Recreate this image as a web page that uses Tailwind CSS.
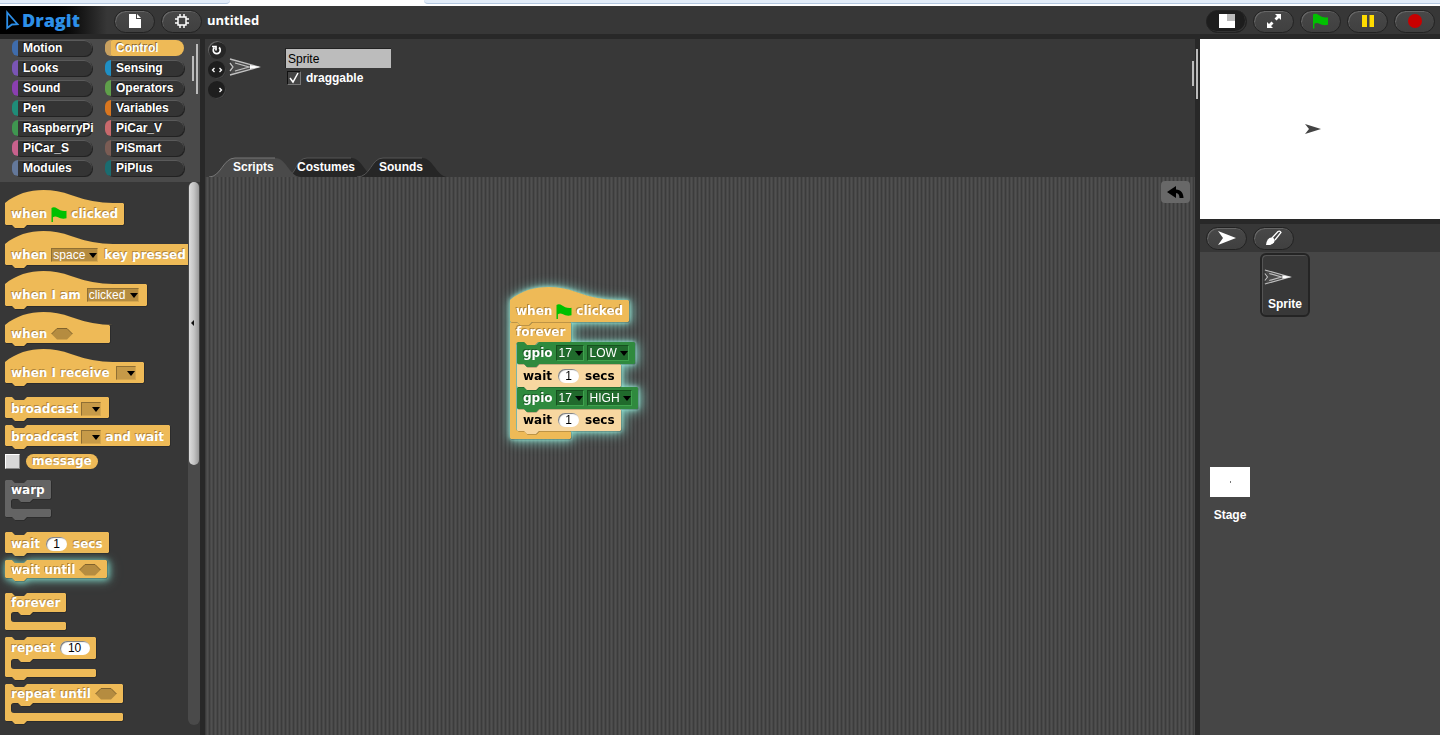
<!DOCTYPE html>
<html lang="en">
<head>
<meta charset="utf-8">
<title>Dragit</title>
<script src="https://cdn.jsdelivr.net/npm/@tailwindcss/browser@4"></script>
</head>
<body class="flex h-screen flex-col overflow-hidden bg-[#282828] font-['Liberation_Sans',sans-serif] text-xs font-bold text-white">

<svg class="hidden">
  <symbol id="flag" viewBox="0 0 16 16"><path d="M0 1C2-.2 4 .2 6 1.500S12 5 16 4v8C12 13 9 12 7 11s-4-1-5.500 0V16H0z" fill="#00c000"/></symbol>
  <symbol id="arrow" viewBox="0 0 8 5"><path d="M0 0h8L4 5z" fill="#000"/></symbol>
  <symbol id="hex" viewBox="0 0 22 12"><path d="M6 .5h10L21.500 6 16 11.500H6L.5 6z" fill="#b58c40"/><path d="M.5 6 6 .5h10L21.500 6" fill="none" stroke="#80622c"/></symbol>
  <symbol id="turtle" viewBox="0 0 32 18"><path d="M1 1 30 9 1 17 5 9z" fill="#4a4a4a"/><path d="M1 1 30 9 1 17M1 5 4 9 1 13M6 5l14 4-14 4" fill="none" stroke="#c0c0c0" stroke-width="1.300"/><path d="M21 7l10 2-10 2z" fill="#fff"/></symbol>
</svg>

<div class="flex h-[6px] shrink-0 bg-white">
  <div class="h-1 w-[230px] rounded-br border-b border-[#b4c8e0] bg-[#e2ecf8]"></div>
  <div class="w-[194px]"></div>
  <div class="h-1 flex-1 rounded-bl border-b border-[#b4c8e0] bg-[#e2ecf8]"></div>
</div>

<header class="flex h-7 shrink-0 items-center bg-[#373737]">
  <div class="flex h-full w-[107px] shrink-0 items-center gap-0.5 bg-linear-to-r from-black from-40% to-[#373737] pl-1.5">
    <svg class="h-5 w-[14px]" viewBox="0 0 14 20"><path d="M1.200 2.500 11.500 14.200 6 14.500 1.200 18z" fill="none" stroke="#2d8fe8" stroke-width="1.800"/></svg>
    <span class="font-['Open_Sans',sans-serif] text-[18px] leading-6 font-extrabold text-[#2d8fe8]">Dragit</span>
  </div>
  <div class="flex gap-1.5 pt-0.5 pl-[7px]">
    <button aria-label="File" class="flex h-[23px] w-[41px] items-center justify-center rounded-full border border-[#222] bg-linear-to-b from-[#484848] to-[#404040] shadow-[inset_1px_1px_0_#666]"><svg class="h-[14px] w-3" viewBox="0 0 12 14"><path d="M0 0h7v5h5v9H0zM8 0l4 4H8z" fill="#fff"/></svg></button>
    <button aria-label="Settings" class="flex h-[23px] w-[41px] items-center justify-center rounded-full border border-[#222] bg-linear-to-b from-[#484848] to-[#404040] shadow-[inset_1px_1px_0_#666]"><svg class="size-[14px]" viewBox="0 0 14 14"><path d="M5 0v3M9 0v3M5 11v3M9 11v3M0 5h3M0 9h3M11 5h3M11 9h3M3 3h8v8H3z" fill="none" stroke="#fff" stroke-width="1.500"/></svg></button>
  </div>
  <h1 class="ml-[5px] flex-1 pt-0.5 font-['Open_Sans',sans-serif] text-[13px]">untitled</h1>
  <div class="flex gap-1.5 pt-0.5 pr-[5px]">
    <button aria-label="Stage size" class="flex h-[23px] w-[41px] items-center justify-center rounded-full border border-[#222] bg-[#1d1d1d] shadow-[inset_-1px_-1px_0_#333]"><svg class="h-[14px] w-4" viewBox="0 0 16 14"><path d="M0 0h16v14H0z" fill="#fff"/><path d="M8 0h8v7H8z" fill="#bbb"/></svg></button>
    <button aria-label="Full screen" class="flex h-[23px] w-[41px] items-center justify-center rounded-full border border-[#222] bg-linear-to-b from-[#484848] to-[#404040] shadow-[inset_1px_1px_0_#666]"><svg class="size-[14px]" viewBox="0 0 14 14"><path d="M14 0v6l-2-2-2.500 2.500-2-2L10 2 8 0zM0 14V8l2 2 2.500-2.500 2 2L4 12l2 2z" fill="#fff"/></svg></button>
    <button aria-label="Run" class="flex h-[23px] w-[41px] items-center justify-center rounded-full border border-[#222] bg-linear-to-b from-[#484848] to-[#404040] shadow-[inset_1px_1px_0_#666]"><svg class="h-4 w-[15px]"><use href="#flag"/></svg></button>
    <button aria-label="Pause" class="flex h-[23px] w-[41px] items-center justify-center rounded-full border border-[#222] bg-linear-to-b from-[#484848] to-[#404040] shadow-[inset_1px_1px_0_#666]"><svg class="h-3 w-3" viewBox="0 0 12 12"><path d="M0 0h5v12H0zM7.500 0h5v12h-5z" fill="#ffdc00"/></svg></button>
    <button aria-label="Stop" class="flex h-[23px] w-[41px] items-center justify-center rounded-full border border-[#222] bg-linear-to-b from-[#484848] to-[#404040] shadow-[inset_1px_1px_0_#666]"><span class="size-[14px] rounded-full bg-[#c80000]"></span></button>
  </div>
</header>

<main class="flex min-h-0 flex-1 gap-[5px] pt-[5px]">

  <aside class="flex w-[200px] shrink-0 flex-col bg-[#373737]">
    <div class="relative h-[143px] shrink-0 bg-[#4a4a4a] pl-3">
      <div id="cats" class="grid w-[172px] grid-cols-[80px_79px] gap-x-[13px] gap-y-[4px] pt-px"></div>
      <div class="absolute top-[17px] left-[192px] h-[25px] w-0.5 bg-[#bbb]"></div>
      <div class="absolute top-[5px] left-[196px] h-[50px] w-0.5 bg-[#bbb]"></div>
    </div>

    <div class="flex min-h-0 flex-1">
      <div class="flex min-w-0 flex-1 flex-col items-start gap-[7px] overflow-hidden pt-[9px] pl-[5px] font-['DejaVu_Sans',sans-serif] leading-4 whitespace-nowrap [text-shadow:-1px_-1px_0_#b0863c]">
        <div data-shape="hat" class="relative isolate flex h-[34px] shrink-0 items-center gap-1 px-1.5 pt-3"><span>when</span><svg class="h-[15px] w-4"><use href="#flag"/></svg><span>clicked</span></div>
        <div data-shape="hat" class="relative isolate flex h-[33px] w-[186px] shrink-0 items-center gap-1 pt-3 pl-1.5"><span>when</span>
          <span class="relative flex"><select aria-label="Key" class="h-[14px] w-[47px] appearance-none border border-[#8f6f34] border-r-[#d6a74e] border-b-[#d6a74e] bg-[#b58c40] pl-px font-['Liberation_Sans',sans-serif] text-xs leading-3 font-normal"><option>space</option></select><svg class="pointer-events-none absolute top-[5px] right-px h-[5px] w-2"><use href="#arrow"/></svg></span><span class="pl-0.5">key pressed</span></div>
        <div data-shape="hat" class="relative isolate flex h-[34px] shrink-0 items-center gap-1.5 px-1.5 pt-3"><span>when I am</span>
          <span class="relative flex pr-0.5"><select aria-label="Interaction" class="h-[14px] w-[52px] appearance-none border border-[#8f6f34] border-r-[#d6a74e] border-b-[#d6a74e] bg-[#b58c40] pl-px font-['Liberation_Sans',sans-serif] text-xs leading-3 font-normal"><option>clicked</option></select><svg class="pointer-events-none absolute top-[5px] right-[3px] h-[5px] w-2"><use href="#arrow"/></svg></span></div>
        <div data-shape="hat" class="relative isolate flex h-[30px] w-[105px] shrink-0 items-center gap-1 px-1.5 pt-3"><span>when</span><svg class="h-3 w-[22px]"><use href="#hex"/></svg></div>
        <div data-shape="hat" class="relative isolate flex h-[33px] shrink-0 items-center gap-1.5 px-1.5 pt-3"><span>when I receive</span>
          <span class="relative flex pr-0.5"><select aria-label="Received message" class="h-[14px] w-5 appearance-none border border-[#8f6f34] border-r-[#d6a74e] border-b-[#d6a74e] bg-[#c69a48]"><option></option></select><svg class="pointer-events-none absolute top-[5px] right-[3px] h-[5px] w-2"><use href="#arrow"/></svg></span></div>

        <div data-shape="command" class="relative isolate mt-[7px] flex h-[21px] shrink-0 items-center gap-0.5 px-1.5 pt-0.5"><span>broadcast</span>
          <span class="relative flex pr-0.5"><select aria-label="Message" class="h-[14px] w-5 appearance-none border border-[#8f6f34] border-r-[#d6a74e] border-b-[#d6a74e] bg-[#c69a48]"><option></option></select><svg class="pointer-events-none absolute top-[5px] right-[3px] h-[5px] w-2"><use href="#arrow"/></svg></span></div>
        <div data-shape="command" class="relative isolate flex h-[21px] shrink-0 items-center gap-0.5 px-1.5 pt-0.5"><span>broadcast</span>
          <span class="relative flex pr-0.5"><select aria-label="Message to wait for" class="h-[14px] w-5 appearance-none border border-[#8f6f34] border-r-[#d6a74e] border-b-[#d6a74e] bg-[#c69a48]"><option></option></select><svg class="pointer-events-none absolute top-[5px] right-[3px] h-[5px] w-2"><use href="#arrow"/></svg></span><span class="pl-px">and wait</span></div>
        <label class="mt-px flex shrink-0 items-center gap-1.5"><input type="checkbox" class="size-[15px] appearance-none border border-[#888] border-t-white border-l-white bg-[#d8d8d8]"><span class="h-[15px] rounded-full bg-[#eeba57] px-1.5 leading-[15px]">message</span></label>

        <div data-shape="loop" data-fill="#646464" class="relative isolate mt-1 flex w-[46px] shrink-0 flex-col [text-shadow:-1px_-1px_0_#444]"><div class="flex h-[19px] items-center px-1.5">warp</div><div class="h-[10px]"></div><div class="h-2"></div></div>

        <div data-shape="command" class="relative isolate mt-2 flex h-[21px] shrink-0 items-center gap-1.5 px-1.5 pt-0.5"><span>wait</span><input aria-label="Seconds to wait" value="1" class="h-[14px] w-[21px] rounded-full bg-white text-center font-['Liberation_Sans',sans-serif] text-xs font-normal text-black shadow-[inset_1px_1px_1px_#777] [text-shadow:none]"><span>secs</span></div>
        <div data-shape="command" class="relative isolate flex h-[18px] shrink-0 items-center gap-1 px-1.5 pt-0.5 [filter:drop-shadow(1px_1px_3px_#7fd8c8cc)_drop-shadow(1px_1px_5px_#7fd8c8aa)]"><span>wait until</span><svg class="h-3 w-[22px]"><use href="#hex"/></svg></div>

        <div data-shape="loop" data-cap class="relative isolate mt-2 flex shrink-0 flex-col"><div class="flex h-[19px] items-center px-1.5">forever</div><div class="h-[10px]"></div><div class="h-2"></div></div>
        <div data-shape="loop" class="relative isolate flex shrink-0 flex-col"><div class="flex h-[22px] items-center gap-1 px-1.5"><span>repeat</span><input aria-label="Repeat count" value="10" class="h-[14px] w-[30px] rounded-full bg-white text-center font-['Liberation_Sans',sans-serif] text-xs font-normal text-black shadow-[inset_1px_1px_1px_#777] [text-shadow:none]"></div><div class="h-[10px]"></div><div class="h-2"></div></div>
        <div data-shape="loop" class="relative isolate flex shrink-0 flex-col"><div class="flex h-[19px] items-center gap-1 px-1.5"><span>repeat until</span><svg class="h-3 w-[22px]"><use href="#hex"/></svg></div><div class="h-[10px]"></div><div class="h-2"></div></div>
      </div>
      <div class="relative mb-[10px] w-3 shrink-0 rounded-full bg-[#4a4a4a]">
        <div class="ml-px h-[283px] w-[10px] rounded-full bg-linear-to-r from-[#ddd] via-[#c4c4c4] to-[#999]"></div>
        <svg class="absolute top-[137px] left-[2px] h-2 w-[6px]" viewBox="0 0 6 8"><path d="M4 1v6L1 4z" fill="#111"/></svg>
      </div>
    </div>
  </aside>

  <section class="flex min-w-0 flex-1 flex-col bg-[#383838]">
    <div class="relative flex h-[138px] shrink-0">
      <div class="flex w-6 flex-col items-center gap-[2px] pt-[2px]">
        <button aria-label="Can rotate" class="flex size-[18px] items-center justify-center rounded-full bg-[#262626] shadow-[inset_1px_1px_0_#666]"><svg class="size-[10px]" viewBox="0 0 10 10"><path d="M7 2.500A3.500 3.500 0 1 1 2.500 2.500M0 1.500h4v4" fill="none" stroke="#fff" stroke-width="1.700"/></svg></button>
        <button aria-label="Only face left or right" class="flex size-[18px] items-center justify-center rounded-full bg-[#1e1e1e] shadow-[inset_-1px_-1px_0_#444]"><svg class="h-[6px] w-3" viewBox="0 0 12 6"><path d="M3.500 1l-2 2 2 2M8.500 1l2 2-2 2" fill="none" stroke="#fff" stroke-width="1.300"/></svg></button>
        <button aria-label="Don't rotate" class="flex size-[18px] items-center justify-center rounded-full bg-[#1e1e1e] shadow-[inset_-1px_-1px_0_#444]"><svg class="h-[6px] w-3" viewBox="0 0 12 6"><path d="M8.500 1l2 2-2 2" fill="none" stroke="#fff" stroke-width="1.300"/></svg></button>
      </div>
      <svg class="mt-[19px] h-[18px] w-8"><use href="#turtle"/></svg>
      <div class="mt-[9px] ml-6 flex flex-col gap-[2px]">
        <input aria-label="Sprite name" value="Sprite" class="h-[20px] w-[106px] border-t border-l border-[#222] bg-[#bcbcbc] pl-0.5 text-xs font-normal text-black">
        <label class="flex items-center gap-[5px] pl-[2px]"><span class="relative flex"><input type="checkbox" checked class="size-[14px] appearance-none border border-[#111] border-r-[#777] border-b-[#777] bg-[#444]"><svg class="pointer-events-none absolute inset-0 size-[14px]" viewBox="0 0 14 14"><path d="M3 7l3 4 5-9" fill="none" stroke="#fff" stroke-width="1.500"/></svg></span>draggable</label>
      </div>
      <nav class="absolute bottom-0 left-0 flex h-5 items-center pl-7">
        <svg class="absolute bottom-0 left-0 h-5 w-[242px]" viewBox="0 0 242 20">
          <path d="M152 20c14 0 14-19 26-19h39c12 0 14 19 26 19z" fill="#262626"/>
          <path d="M80 20C92 20 90 1 102 1h44c12 0 14 19 26 19z" fill="#262626"/><path d="M80 20C92 20 90 1 102 1h44" fill="none" stroke="#555"/>
          <path d="M152 20c14 0 14-19 26-19h39" fill="none" stroke="#555"/>
          <path d="M4 20C16 20 18 1 30 1h40c12 0 14 19 26 19z" fill="#4a4a4a"/><path d="M4 20C16 20 18 1 30 1h40" fill="none" stroke="#777"/>
        </svg>
        <button class="relative w-16 text-left">Scripts</button>
        <button class="relative w-[82px] text-left">Costumes</button>
        <button class="relative text-left">Sounds</button>
      </nav>
      <div class="absolute top-[22px] right-[1px] h-[25px] w-0.5 bg-[#bbb]"></div>
      <div class="absolute top-[10px] -right-[3px] h-[50px] w-0.5 bg-[#bbb]"></div>
    </div>

    <div class="relative flex-1 bg-[repeating-linear-gradient(90deg,#3c3c3c_0_1px,#484848_1px_2px,#505050_2px_3px,#484848_3px_4px)]">
      <button aria-label="Undo" class="absolute top-1 right-[5px] flex h-[22px] w-[29px] items-center justify-center rounded-sm bg-[#686868]"><svg class="h-[13px] w-[17px]" viewBox="0 0 17 13"><path d="M0 6l9-6v3.500c5 .5 7.500 3.500 7.500 8.500h-4c0-3-1-4.500-3.500-5V12z" fill="#000"/></svg></button>

      <div class="absolute top-[111px] left-[305px] isolate flex flex-col items-start font-['DejaVu_Sans',sans-serif] leading-4 whitespace-nowrap [filter:drop-shadow(0_0_2px_#9fe8d8)_drop-shadow(1px_1px_6px_#7fd8c8)]">
        <div data-shape="hat" class="relative isolate z-10 flex h-[34px] items-center gap-1 px-1.5 pt-3 [text-shadow:-1px_-1px_0_#b0863c]"><span>when</span><svg class="h-[15px] w-4"><use href="#flag"/></svg><span>clicked</span></div>
        <div data-shape="loop" data-cap class="relative isolate flex w-[61px] flex-col">
          <div class="flex h-[20px] items-center px-1.5 [text-shadow:-1px_-1px_0_#b0863c]">forever</div>
          <div class="ml-[7px] flex flex-col items-start">
            <div data-shape="command" data-fill="#2f8a3e" class="relative isolate z-40 flex h-[22px] items-center gap-[3px] px-1.5 [text-shadow:-1px_-1px_0_#1c5a28]"><span>gpio</span>
              <span class="relative flex"><select aria-label="Pin 17 low" class="h-4 w-7 appearance-none border border-[#17501f] border-r-[#3fa34e] border-b-[#3fa34e] bg-[#206a2c] pl-0.5 font-['Liberation_Sans',sans-serif] text-xs leading-3 font-normal"><option>17</option></select><svg class="pointer-events-none absolute top-[6px] right-px h-[5px] w-2"><use href="#arrow"/></svg></span>
              <span class="relative flex"><select aria-label="First level" class="h-4 w-[42px] appearance-none border border-[#17501f] border-r-[#3fa34e] border-b-[#3fa34e] bg-[#206a2c] pl-0.5 font-['Liberation_Sans',sans-serif] text-xs leading-3 font-normal"><option>LOW</option></select><svg class="pointer-events-none absolute top-[6px] right-px h-[5px] w-2"><use href="#arrow"/></svg></span></div>
            <div data-shape="command" data-fill="#f7d7a0" class="relative isolate z-30 flex h-[23px] items-center gap-1.5 px-1.5 text-black"><span>wait</span><input aria-label="First wait" value="1" class="h-[14px] w-[21px] rounded-full bg-white text-center font-['Liberation_Sans',sans-serif] text-xs font-normal shadow-[inset_1px_1px_1px_#777]"><span>secs</span></div>
            <div data-shape="command" data-fill="#2f8a3e" class="relative isolate z-20 flex h-[22px] items-center gap-[3px] px-1.5 [text-shadow:-1px_-1px_0_#1c5a28]"><span>gpio</span>
              <span class="relative flex"><select aria-label="Pin 17 high" class="h-4 w-7 appearance-none border border-[#17501f] border-r-[#3fa34e] border-b-[#3fa34e] bg-[#206a2c] pl-0.5 font-['Liberation_Sans',sans-serif] text-xs leading-3 font-normal"><option>17</option></select><svg class="pointer-events-none absolute top-[6px] right-px h-[5px] w-2"><use href="#arrow"/></svg></span>
              <span class="relative flex"><select aria-label="Second level" class="h-4 w-[45px] appearance-none border border-[#17501f] border-r-[#3fa34e] border-b-[#3fa34e] bg-[#206a2c] pl-0.5 font-['Liberation_Sans',sans-serif] text-xs leading-3 font-normal"><option>HIGH</option></select><svg class="pointer-events-none absolute top-[6px] right-px h-[5px] w-2"><use href="#arrow"/></svg></span></div>
            <div data-shape="command" data-fill="#f7d7a0" class="relative isolate z-10 flex h-[22px] items-center gap-1.5 px-1.5 text-black"><span>wait</span><input aria-label="Second wait" value="1" class="h-[14px] w-[21px] rounded-full bg-white text-center font-['Liberation_Sans',sans-serif] text-xs font-normal shadow-[inset_1px_1px_1px_#777]"><span>secs</span></div>
          </div>
          <div class="h-2"></div>
        </div>
      </div>
    </div>
  </section>

  <aside class="flex w-[240px] shrink-0 flex-col">
    <div class="flex h-[180px] shrink-0 items-center justify-center bg-white"><svg class="mr-[15px] h-[10px] w-4" viewBox="0 0 16 10"><path d="M0 0l16 5-16 5 4-5z" fill="#444"/></svg></div>
    <div class="mt-[5px] flex h-7 shrink-0 items-center gap-1.5 bg-[#373737] pl-[6px]">
      <button aria-label="New turtle sprite" class="flex h-[23px] w-[41px] items-center justify-center rounded-full border border-[#222] bg-linear-to-b from-[#484848] to-[#404040] shadow-[inset_1px_1px_0_#666]"><svg class="h-[14px] w-[18px]" viewBox="0 0 18 14"><path d="M0 0l18 7-18 7 5-7z" fill="#fff"/></svg></button>
      <button aria-label="Paint new sprite" class="flex h-[23px] w-[41px] items-center justify-center rounded-full border border-[#222] bg-linear-to-b from-[#484848] to-[#404040] shadow-[inset_1px_1px_0_#666]"><svg class="size-4" viewBox="0 0 16 16"><path d="M6 8l6-6.500q2-1 3 1L9 10" fill="none" stroke="#fff" stroke-width="1.300"/><path d="M0 15q1-8 6-7.500 4 1 2 5-2 3-8 2.500z" fill="#fff"/></svg></button>
    </div>
    <div class="flex flex-1 items-start bg-[#464646]">
      <div class="flex w-[60px] flex-col items-center gap-2.5 pt-[215px]">
        <div class="flex h-[30px] w-10 items-center justify-center bg-white"><span class="h-0.5 w-px bg-[#777]"></span></div>
        <span>Stage</span>
      </div>
      <button class="mt-px flex h-16 w-[50px] flex-col rounded-md border-2 border-[#242424] bg-[#383838] pt-[13px] shadow-[inset_1px_1px_0_#555]">
        <svg class="ml-0.5 h-[18px] w-7 shrink-0"><use href="#turtle"/></svg>
        <span class="mt-2.5 w-full text-center">Sprite</span>
      </button>
    </div>
  </aside>
</main>

<script>
  // Category buttons, in reading order.
  const categories = [
    ['Motion', '#3f6cab'], ['Control', '#c8a060'], ['Looks', '#7a55b5'], ['Sensing', '#1f8fc4'],
    ['Sound', '#8a3fb0'], ['Operators', '#5f9f4a'], ['Pen', '#1f8c78'], ['Variables', '#d9761f'],
    ['RaspberryPi', '#3f9650'], ['PiCar_V', '#c8696c'], ['PiCar_S', '#c8618c'], ['PiSmart', '#7a5c54'],
    ['Modules', '#64789a'], ['PiPlus', '#1a6c70']
  ];
  document.getElementById('cats').innerHTML = categories.map(([name, color]) => {
    const on = name === 'Control';
    const face = on ? 'bg-[#eeba57] [text-shadow:-1px_-1px_0_#8a6a30]' : 'bg-[#343434] shadow-[1px_1px_0_#222,inset_0_1px_0_#5a5a5a] [text-shadow:-1px_-1px_0_#111]';
    return `<button class="flex h-4 items-center rounded-full text-left leading-4 whitespace-nowrap ${face}">
      <span class="mr-[5px] h-full w-1.5 shrink-0 rounded-l-full" style="background:${color}"></span>${name}</button>`;
  }).join('');

  // Jigsaw outlines, redrawn from each block's own box whenever it changes size.
  const notch = (x, y) => `L${x + 7} ${y}L${x + 10} ${y + 3}L${x + 19} ${y + 3}L${x + 22} ${y}`;
  const bump = (x, y) => `L${x + 22} ${y}L${x + 19} ${y + 3}L${x + 10} ${y + 3}L${x + 7} ${y}`;
  function outline(el) {
    const w = el.offsetWidth, h = el.offsetHeight, kind = el.dataset.shape;
    let d;
    if (kind === 'hat') {
      d = `M0 12C18 -3 44 -4 66 4Q88 12 108 12L${w - 1} 12L${w} 13V${h - 1}L${w - 1} ${h}${bump(0, h)}L1 ${h}L0 ${h - 1}Z`;
    } else {
      d = `M0 1L1 0${notch(0, 0)}L${w - 1} 0L${w} 1`;
      if (kind === 'loop') {
        const a = el.children[0].offsetHeight, b = a + el.children[1].offsetHeight;
        d += `V${a - 1}L${w - 1} ${a}${bump(6, a)}L9 ${a}Q6 ${a} 6 ${a + 3}V${b - 3}Q6 ${b} 9 ${b}L${w - 1} ${b}L${w} ${b + 1}`;
      }
      d += `V${h - 1}L${w - 1} ${h}${'cap' in el.dataset ? '' : bump(0, h)}L1 ${h}L0 ${h - 1}Z`;
    }
    return d;
  }
  const observer = new ResizeObserver(entries => {
    for (const { target } of entries) {
      const d = outline(target);
      target.querySelectorAll(':scope > svg[data-outline] path').forEach(p => p.setAttribute('d', d));
    }
  });
  for (const el of document.querySelectorAll('[data-shape]')) {
    el.insertAdjacentHTML('beforeend', `<svg data-outline class="pointer-events-none absolute inset-0 -z-10 size-full overflow-visible">
      <path fill="#00000066" transform="translate(.5 .5)"/><path fill="${el.dataset.fill || '#eeba57'}"/></svg>`);
    observer.observe(el);
  }
</script>
</body>
</html>
